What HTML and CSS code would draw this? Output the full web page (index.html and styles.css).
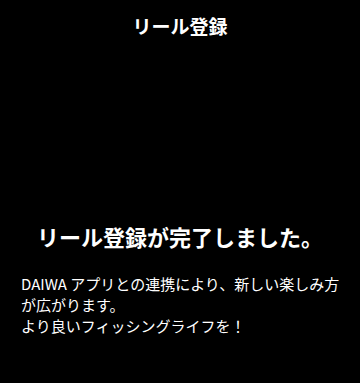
FILE: index.html
```html
<!DOCTYPE html>
<html lang="ja">
<head>
  <meta charset="UTF-8">
  <meta name="viewport" content="width=device-width, initial-scale=1.0">
  <title>リール登録</title>
  <link rel="stylesheet" href="styles.css">
</head>
<body>
  <div class="screen">
    <!-- Top bar -->
    <div class="header">
      <div class="header-title">リール登録</div>
    </div>

    <div class="content">
      <div class="done-title">リール登録が完了しました。</div>
      <p class="message">
        DAIWA アプリとの連携により、新しい楽しみ方が広がります。<br>
        より良いフィッシングライフを！
      </p>
    </div>
  </div>
</body>
</html>
```

FILE: styles.css
```css
html, body {
  margin: 0;
  padding: 0;
  background-color: #000;
}

.screen {
  font-family: "Noto Sans CJK JP", "Noto Sans", sans-serif;
  color: #fff;
  width: 360px;
  min-height: 383px;
  display: flex;
  flex-direction: column;
}

.header {
  height: 50px;
  display: flex;
  align-items: center;
  justify-content: center;
}

.header-title {
  font-size: 19px;
  font-weight: bold;
}

.content {
  padding: 172px 20px 0 21px;
}

.done-title {
  font-size: 22px;
  font-weight: bold;
  line-height: 29px;
  text-align: center;
  margin-left: -21px;
  margin-right: -20px;
}

.message {
  margin: 22px 0 0;
  font-size: 15px;
  line-height: 21px;
}
```
